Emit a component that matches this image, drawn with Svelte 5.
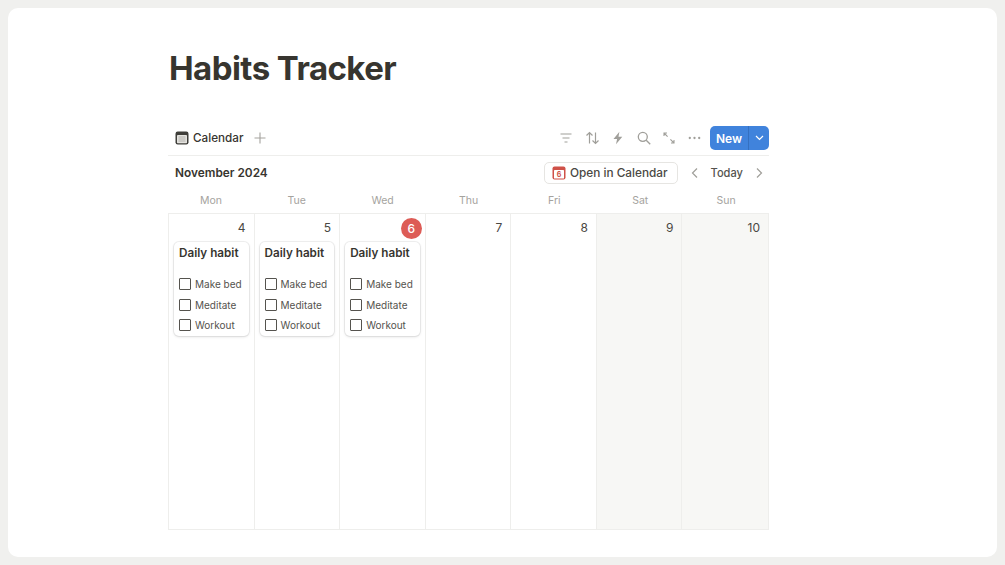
<script>
  const weekdays = ["Mon", "Tue", "Wed", "Thu", "Fri", "Sat", "Sun"];
  const days = [
    { n: 4, habit: true },
    { n: 5, habit: true },
    { n: 6, habit: true, today: true },
    { n: 7 },
    { n: 8 },
    { n: 9, weekend: true },
    { n: 10, weekend: true },
  ];
  const todos = ["Make bed", "Meditate", "Workout"];
</script>

<div class="screen">
  <main class="panel">
    <div class="content">
      <h1>Habits Tracker</h1>

      <div class="tabs">
        <div class="tab">
          <svg width="14" height="14" viewBox="0 0 14 14">
            <rect x="0.5" y="0.5" width="13" height="13" rx="2.2" fill="#3f3e3a" />
            <rect x="2" y="4" width="10" height="8.3" rx="0.8" fill="#e4e3df" />
            <path d="M3.5 6h7M3.5 8h7M3.5 10h7" stroke="#a5a39e" stroke-width="0.8" />
          </svg>
          <span>Calendar</span>
          <svg class="plus" width="12" height="12" viewBox="0 0 12 12">
            <path d="M6 0.5v11M0.5 6h11" stroke="#a5a39e" stroke-width="1.1" />
          </svg>
        </div>

        <div class="tools">
          <svg width="14" height="14" viewBox="0 0 14 14" fill="none" stroke="#a09f9a" stroke-width="1.2">
            <path d="M1.5 3h11M3.5 7h7M5.5 11h3" />
          </svg>
          <svg width="15" height="14" viewBox="0 0 15 14" fill="none" stroke="#a09f9a" stroke-width="1.2">
            <path d="M4.5 12.5V1.5M1.5 4.5l3-3 3 3M10.5 1.5v11M7.5 9.5l3 3 3-3" />
          </svg>
          <svg width="14" height="14" viewBox="0 0 14 14">
            <path d="M8.4 0.8L2.5 8h3.6l-1.1 5.2L11.3 5.8H7.5z" fill="#a09f9a" />
          </svg>
          <svg width="14" height="14" viewBox="0 0 14 14" fill="none" stroke="#a09f9a" stroke-width="1.3">
            <circle cx="5.8" cy="5.8" r="4.5" />
            <path d="M9.2 9.2l4 4" />
          </svg>
          <svg width="14" height="14" viewBox="0 0 14 14" fill="none" stroke="#a09f9a" stroke-width="1.1">
            <path d="M2 2l3.6 3.6M2 5V2h3M12 12L8.4 8.4M12 9v3H9" />
          </svg>
          <svg width="13" height="14" viewBox="0 0 13 14" fill="#a09f9a">
            <circle cx="1.8" cy="7" r="1.15" />
            <circle cx="6.5" cy="7" r="1.15" />
            <circle cx="11.2" cy="7" r="1.15" />
          </svg>
          <div class="new">
            <span class="new-label">New</span>
            <span class="new-arrow">
              <svg width="9" height="6" viewBox="0 0 9 6" fill="none" stroke="#fff" stroke-width="1.2">
                <path d="M1 1l3.5 3.5L8 1" />
              </svg>
            </span>
          </div>
        </div>
      </div>

      <div class="month-bar">
        <span class="month">November 2024</span>
        <div class="month-actions">
          <button class="open-btn">
            <svg width="14" height="14" viewBox="0 0 14 14">
              <rect x="0.5" y="0.5" width="13" height="13" rx="2" fill="#cf5148" />
              <rect x="2" y="4" width="10" height="8.5" rx="0.6" fill="#fff" />
              <text x="7" y="11.4" text-anchor="middle" class="cal-day">6</text>
            </svg>
            Open in Calendar
          </button>
          <svg width="8" height="12" viewBox="0 0 8 12" fill="none" stroke="#a09f9a" stroke-width="1.2">
            <path d="M6 1.5L1.5 6 6 10.5" />
          </svg>
          <span class="today-link">Today</span>
          <svg class="chev-next" width="8" height="12" viewBox="0 0 8 12" fill="none" stroke="#a09f9a" stroke-width="1.2">
            <path d="M2 1.5L6.5 6 2 10.5" />
          </svg>
        </div>
      </div>

      <div class="weekdays">
        {#each weekdays as day}
          <span>{day}</span>
        {/each}
      </div>

      <div class="grid">
        {#each days as day}
          <div class="cell" class:weekend={day.weekend}>
            <div class="date-row">
              <span class="date" class:today={day.today}>{day.n}</span>
            </div>
            {#if day.habit}
              <div class="card">
                <div class="card-title">Daily habit</div>
                {#each todos as todo}
                  <div class="todo">
                    <span class="box"></span>
                    <span>{todo}</span>
                  </div>
                {/each}
              </div>
            {/if}
          </div>
        {/each}
      </div>
    </div>
  </main>
</div>

<style>
  :global(body) {
    margin: 0;
    background: #f0f0ee;
    font-family: Inter, "Liberation Sans", sans-serif;
  }

  .screen {
    width: 1005px;
    height: 565px;
    padding: 8px;
    box-sizing: border-box;
    overflow: hidden;
  }

  .panel {
    width: 989px;
    height: 549px;
    background: #fff;
    border-radius: 10px;
    padding-left: 160px;
    box-sizing: border-box;
  }

  .content {
    width: 601px;
  }

  h1 {
    margin: 0;
    padding: 39px 0 0 1px;
    font-size: 33px;
    line-height: 42px;
    font-weight: 700;
    letter-spacing: -0.55px;
    color: #37352f;
  }

  .tabs {
    display: flex;
    align-items: center;
    justify-content: space-between;
    height: 34px;
    margin-top: 32px;
    border-bottom: 1px solid #eeeeec;
  }

  .tab {
    display: flex;
    align-items: center;
    padding-left: 7px;
    font-size: 11.7px;
    font-weight: 500;
    color: #37352f;
  }

  .tab span {
    margin-left: 4px;
  }

  .plus {
    margin-left: 11px;
  }

  .tools {
    display: flex;
    align-items: center;
    gap: 11.5px;
  }

  .new {
    display: flex;
    height: 24px;
    margin-left: -2px;
    border-radius: 5px;
    overflow: hidden;
    background: #4083dc;
    color: #fff;
    font-size: 12px;
    font-weight: 600;
  }

  .new-label {
    display: flex;
    align-items: center;
    justify-content: center;
    width: 38px;
    border-right: 1px solid #3570c0;
  }

  .new-arrow {
    display: flex;
    align-items: center;
    justify-content: center;
    width: 20px;
  }

  .month-bar {
    display: flex;
    align-items: center;
    justify-content: space-between;
    height: 34px;
    padding-left: 7px;
  }

  .month {
    font-size: 11.85px;
    font-weight: 600;
    color: #37352f;
  }

  .month-actions {
    display: flex;
    align-items: center;
  }

  .open-btn {
    display: flex;
    align-items: center;
    gap: 3.5px;
    height: 22px;
    padding: 0 9px 0 7px;
    margin: 0 13px 0 0;
    background: #fff;
    border: 1px solid #e6e5e2;
    border-radius: 5px;
    font-family: inherit;
    font-size: 11.8px;
    font-weight: 500;
    color: #4a4843;
  }

  .cal-day {
    font-size: 7px;
    font-weight: 700;
    fill: #cf5148;
    font-family: Inter, sans-serif;
  }

  .today-link {
    margin: 0 12px;
    font-size: 11.1px;
    font-weight: 500;
    color: #55534e;
  }

  .chev-next {
    margin-right: 6px;
  }

  .weekdays {
    display: grid;
    grid-template-columns: repeat(7, 1fr);
    height: 25px;
    align-items: center;
    margin-top: -2px;
    text-align: center;
    font-size: 10.5px;
    color: #a5a39e;
  }

  .grid {
    display: grid;
    grid-template-columns: repeat(7, 1fr);
    height: 317px;
    box-sizing: border-box;
    border: 1px solid #eeeeec;
  }

  .cell {
    padding: 0 4px;
    border-right: 1px solid #eeeeec;
    min-width: 0;
  }

  .cell:last-child {
    border-right: none;
  }

  .weekend {
    background: #f7f7f5;
  }

  .date-row {
    display: flex;
    justify-content: flex-end;
    height: 28px;
    align-items: center;
  }

  .date {
    font-size: 12px;
    color: #4a4843;
    line-height: 20px;
    margin-right: 4px;
  }

  .today {
    width: 21px;
    height: 21px;
    line-height: 21px;
    margin-right: -1px;
    border-radius: 50%;
    text-align: center;
    background: #dd5c56;
    color: #fff;
    font-weight: 500;
  }

  .card {
    height: 94px;
    margin: 0 1px;
    box-sizing: border-box;
    padding: 4px 5px;
    border-radius: 5px;
    background: #fff;
    box-shadow: 0 0 0 1px rgba(15, 15, 15, 0.06), 0 1px 3px rgba(15, 15, 15, 0.12);
  }

  .card-title {
    height: 28px;
    font-size: 11.7px;
    line-height: 14px;
    font-weight: 600;
    color: #37352f;
  }

  .todo {
    display: flex;
    align-items: center;
    gap: 4px;
    height: 20.4px;
    font-size: 10px;
    color: #55534e;
    white-space: nowrap;
  }

  .box {
    flex: none;
    width: 10px;
    height: 10px;
    border: 1.3px solid #55534e;
    border-radius: 1px;
  }
</style>
